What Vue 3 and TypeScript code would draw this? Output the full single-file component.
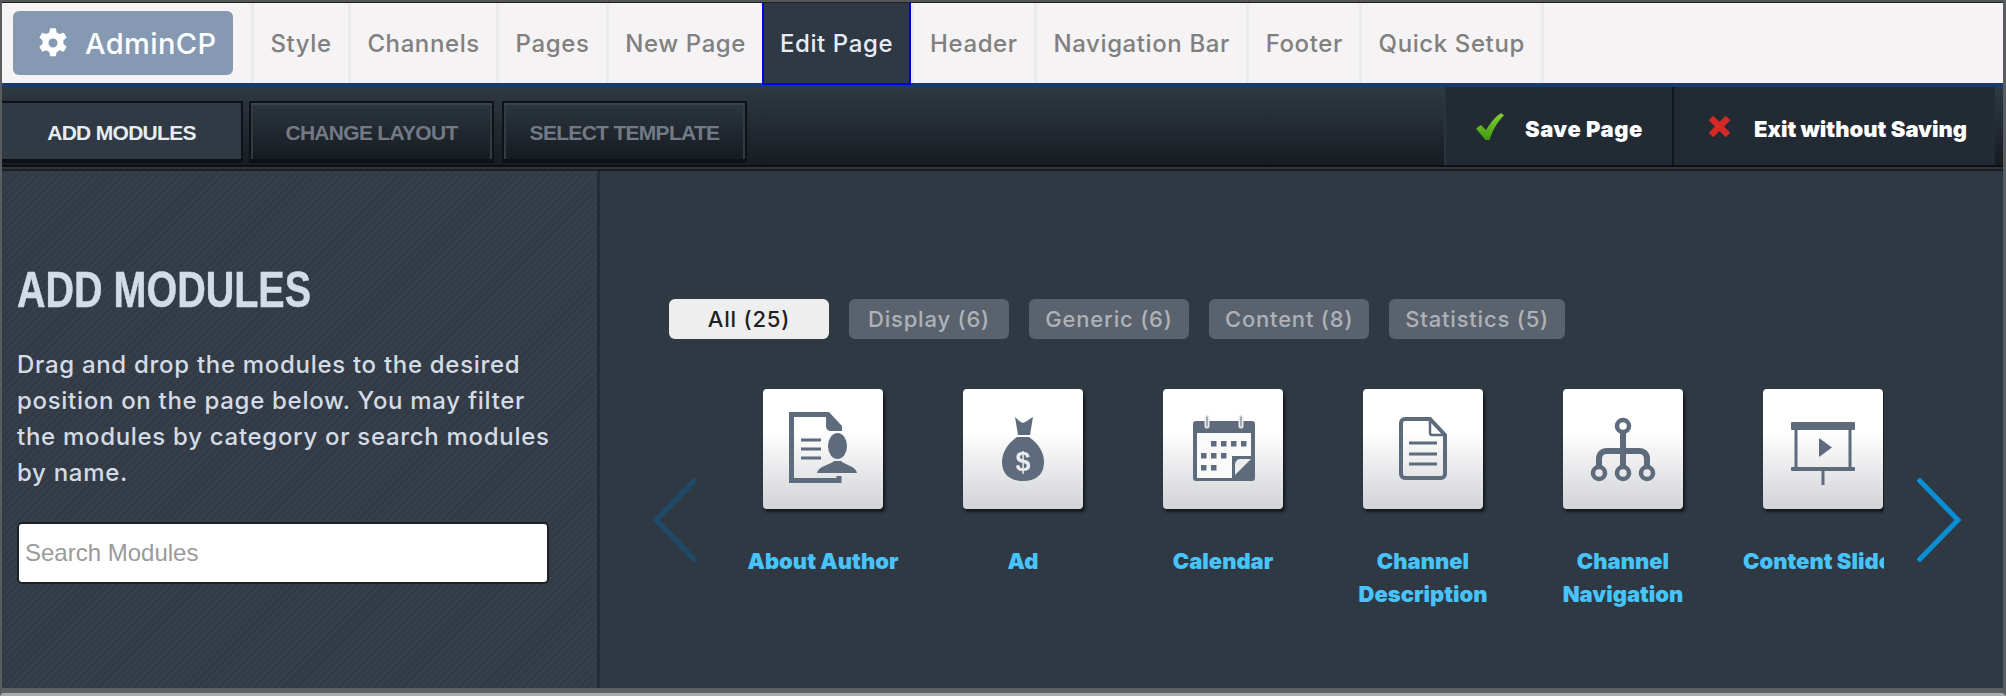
<script setup lang="ts">
interface Module {
  name: string
  icon: string
}

const navItems: string[] = ['Style', 'Channels', 'Pages', 'New Page', 'Edit Page', 'Header', 'Navigation Bar', 'Footer', 'Quick Setup']
const filters: string[] = ['All (25)', 'Display (6)', 'Generic (6)', 'Content (8)', 'Statistics (5)']
const modules: Module[] = [
  { name: 'About Author', icon: 'author' },
  { name: 'Ad', icon: 'bag' },
  { name: 'Calendar', icon: 'calendar' },
  { name: 'Channel Description', icon: 'doc' },
  { name: 'Channel Navigation', icon: 'tree' },
  { name: 'Content Slider', icon: 'screen' }
]
</script>

<template>
  <div class="page">
    <nav class="topnav">
      <div class="brand">
        <svg class="gear" viewBox="0 0 24 24" width="34" height="34">
          <path fill="#fff" fill-rule="evenodd" d="M10 1.500h4l.6 3a8 8 0 0 1 2.100 1.200l2.900-1 2 3.500-2.300 2a8 8 0 0 1 0 2.400l2.300 2-2 3.500-2.900-1a8 8 0 0 1-2.100 1.200l-.6 3h-4l-.6-3a8 8 0 0 1-2.100-1.200l-2.900 1-2-3.500 2.300-2a8 8 0 0 1 0-2.400l-2.300-2 2-3.500 2.900 1a8 8 0 0 1 2.100-1.200zM12 8.800a3.200 3.200 0 1 0 0 6.400 3.200 3.200 0 0 0 0-6.400z" />
        </svg>
        <span>AdminCP</span>
      </div>
      <a v-for="item in navItems" :key="item" class="nav-item" :class="{ active: item === 'Edit Page' }">{{ item }}</a>
    </nav>

    <div class="toolbar">
      <div class="tabs">
        <div class="tab current">ADD MODULES</div>
        <div class="tab">CHANGE LAYOUT</div>
        <div class="tab">SELECT TEMPLATE</div>
      </div>
      <div class="actions">
        <div class="action save">
          <svg viewBox="0 0 28 27" width="28" height="27">
            <defs>
              <linearGradient id="tick" x1="0" y1="0" x2="0" y2="1">
                <stop offset="0" stop-color="#86d132" />
                <stop offset="1" stop-color="#3f9a12" />
              </linearGradient>
            </defs>
            <path fill="url(#tick)" d="M0 15.500l5-3.500 5 5C14 10 19 4 25 0l3 2.500C21 9 17 17 13.500 27h-4z" />
          </svg>
          <span>Save Page</span>
        </div>
        <div class="action exit">
          <svg viewBox="0 0 23 23" width="23" height="23">
            <path stroke="#d42a26" stroke-width="6.500" d="M3 3l17 17M20 3L3 20" fill="none" />
          </svg>
          <span>Exit without Saving</span>
        </div>
      </div>
    </div>
    <div class="rule"></div>

    <div class="content">
      <aside class="sidebar">
        <h1>ADD MODULES</h1>
        <p>Drag and drop the modules to the desired<br />position on the page below. You may filter<br />the modules by category or search modules<br />by name.</p>
        <input class="search" type="text" placeholder="Search Modules" />
      </aside>

      <main class="main">
        <div class="filters">
          <span v-for="(f, i) in filters" :key="f" class="filter" :class="{ on: i === 0 }">{{ f }}</span>
        </div>

        <div class="carousel">
          <svg class="arrow" viewBox="0 0 44 84" width="44" height="84">
            <path d="M43 1L3 42l40 41" fill="none" stroke="#1f4b6b" stroke-width="5" />
          </svg>
          <div class="track">
            <div v-for="m in modules" :key="m.name" class="module">
              <div class="tile">
                <svg viewBox="0 0 120 120" width="120" height="120">
                  <g v-if="m.icon === 'author'">
                    <path d="M63 25.500H28.500v66H76V87" fill="none" stroke="#5d6b7c" stroke-width="5" />
                    <path d="M63 23h3l13 14v5H68c-3 0-5-2-5-5z" fill="#5d6b7c" />
                    <path d="M38 51h20M38 60h20M38 69h20" stroke="#5d6b7c" stroke-width="3" fill="none" />
                    <ellipse cx="74.500" cy="57" rx="9.500" ry="13" fill="#5d6b7c" />
                    <path d="M54 84c1-7 13-8 17-12h7c4 4 15 5 16 12z" fill="#5d6b7c" />
                  </g>
                  <g v-else-if="m.icon === 'bag'">
                    <path d="M52 28c3 3 5 5 8 6 3-1 5-3 10-6l-3 18H55z" fill="#5d6b7c" />
                    <path d="M54 48h12c10 7 15 16 15 25 0 14-10 19-21 19s-21-5-21-19c0-9 5-18 15-25z" fill="#5d6b7c" />
                    <text x="60" y="82" text-anchor="middle" class="dollar">$</text>
                  </g>
                  <g v-else-if="m.icon === 'calendar'">
                    <path d="M33 32h56a3 3 0 0 1 3 3v54a3 3 0 0 1-3 3H33a3 3 0 0 1-3-3V35a3 3 0 0 1 3-3z" fill="#5d6b7c" />
                    <path d="M34 44h54v23H69v22H34z" fill="#fafafa" />
                    <path d="M72 86V76c0-3 2-6 5-6h11z" fill="#eceded" />
                    <path d="M44 28v9M78 28v9" stroke="#eaeaea" stroke-width="5" stroke-linecap="round" />
                    <path d="M44 28v9M78 28v9" stroke="#8d97a3" stroke-width="1.500" stroke-linecap="round" />
                    <g fill="#5d6b7c">
                      <rect x="48" y="52" width="5.500" height="5.500" /><rect x="58" y="52" width="5.500" height="5.500" /><rect x="68" y="52" width="5.500" height="5.500" /><rect x="78" y="52" width="5.500" height="5.500" />
                      <rect x="38" y="64" width="5.500" height="5.500" /><rect x="48" y="64" width="5.500" height="5.500" /><rect x="58" y="64" width="5.500" height="5.500" />
                      <rect x="38" y="76" width="5.500" height="5.500" /><rect x="48" y="76" width="5.500" height="5.500" />
                    </g>
                  </g>
                  <g v-else-if="m.icon === 'doc'">
                    <path d="M42 30h25l15 16v39a4 4 0 0 1-4 4H42a4 4 0 0 1-4-4V34a4 4 0 0 1 4-4z" fill="none" stroke="#5d6b7c" stroke-width="4" />
                    <path d="M67 31v13a2 2 0 0 0 2 2h13" fill="none" stroke="#5d6b7c" stroke-width="2.500" />
                    <path d="M46 54h28M46 65h28M46 75h28" stroke="#5d6b7c" stroke-width="3" fill="none" />
                  </g>
                  <g v-else-if="m.icon === 'tree'">
                    <g fill="none" stroke="#5d6b7c" stroke-width="4.500">
                      <circle cx="60" cy="37" r="6" /><circle cx="36" cy="84" r="6" /><circle cx="60" cy="84" r="6" /><circle cx="84" cy="84" r="6" />
                    </g>
                    <path d="M60 43v35M36 78V70c0-5 3-8 8-8h32c5 0 8 3 8 8v8" fill="none" stroke="#5d6b7c" stroke-width="6" />
                  </g>
                  <g v-else>
                    <rect x="28" y="33" width="64" height="8" rx="1" fill="#5d6b7c" />
                    <rect x="28" y="78" width="64" height="4" rx="1" fill="#5d6b7c" />
                    <path d="M33 40v40M87 40v40" stroke="#5d6b7c" stroke-width="3" />
                    <path d="M56 49l13 9.500-13 9.500z" fill="#5d6b7c" />
                    <path d="M60 82v14" stroke="#5d6b7c" stroke-width="3" />
                  </g>
                </svg>
              </div>
              <div class="label">{{ m.name }}</div>
            </div>
          </div>
          <svg class="arrow next" viewBox="0 0 44 84" width="44" height="84">
            <path d="M1 1l40 41-40 41" fill="none" stroke="#0a8fd4" stroke-width="5" />
          </svg>
        </div>
      </main>
    </div>
  </div>
</template>

<style>
html,
body {
  margin: 0;
  background: #2f3943;
}
</style>

<style scoped>
.page {
  width: 2006px;
  height: 696px;
  display: flex;
  flex-direction: column;
  overflow: hidden;
  font-family: Inter, "Open Sans", sans-serif;
  border-top: 2px solid #55565a;
  border-left: 2px solid #5a5d60;
  border-right: 3px solid #5a5d60;
  border-bottom: 3px solid #a9aaac;
  box-sizing: border-box;
}
.topnav {
  height: 85px;
  flex: none;
  box-sizing: border-box;
  border-top: 1px solid #1c2126;
  border-bottom: 4px solid #1a3a6e;
  background: #f5f3f4;
  display: flex;
  align-items: stretch;
  padding-left: 11px;
}
.brand {
  width: 220px;
  height: 64px;
  margin: 8px 18px 0 0;
  background: #8599b3;
  border-radius: 6px;
  color: #fff;
  display: flex;
  align-items: center;
  gap: 15px;
  padding-left: 23px;
  box-sizing: border-box;
  font-size: 29px;
  letter-spacing: 0.4px;
  font-weight: 500;
}
.nav-item {
  display: flex;
  align-items: center;
  padding: 0 16.400px;
  border-left: 3px solid #ebebeb;
  color: #808080;
  font-size: 24px;
  letter-spacing: 0.6px;
  font-weight: 500;
  white-space: nowrap;
}
.nav-item:last-child {
  border-right: 3px solid #ebebeb;
}
.nav-item.active {
  background: #2f3943;
  color: #e8ecf2;
  border: 2px solid #0000e0;
  border-top: 0;
  margin-bottom: -2px;
  padding: 0 15.500px;
}
.toolbar {
  height: 80px;
  flex: none;
  box-sizing: border-box;
  background: linear-gradient(#2f3942, #171c22);
  border-bottom: 2px solid #0c1014;
  display: flex;
  justify-content: space-between;
}
.rule {
  flex: none;
  height: 2px;
  background: #30343a;
}
.tabs {
  display: flex;
  gap: 8px;
  padding-top: 14px;
}
.tab {
  width: 245px;
  height: 62px;
  box-sizing: border-box;
  border: 2px solid #0e1216;
  border-bottom: 4px solid #0e1216;
  padding-top: 4px;
  background: linear-gradient(#2c3640, #161b20);
  box-shadow: inset 0 2px 0 #3a424a, inset 2px 0 0 #333a42, inset -2px 0 0 #333a42;
  color: #737a85;
  font: bold 21px "Liberation Sans", sans-serif;
  letter-spacing: -0.7px;
  display: flex;
  align-items: center;
  justify-content: center;
}
.tab.current {
  width: 241px;
  margin-right: -2px;
  background: #2f3a44;
  box-shadow: none;
  color: #e8ecf2;
  border-left: 0;
}
.actions {
  display: flex;
  margin-right: 8px;
  height: 78px;
}
.action {
  background: #222b34;
  border-left: 2px solid #11161b;
  display: flex;
  align-items: center;
  box-sizing: border-box;
  color: #fff;
  font-size: 22px;
  letter-spacing: 0;
  font-weight: 900;
  white-space: nowrap;
}
.action span {
  margin-top: 5px;
}
.save {
  width: 228px;
  border-left-color: #2a333c;
  padding-left: 30px;
  gap: 21px;
  letter-spacing: 0.5px;
}
.exit {
  width: 323px;
  padding-left: 34px;
  gap: 23px;
}
.content {
  flex: 1;
  display: flex;
  border-top: 2px solid #1b1f24;
  border-bottom: 5px solid #5d6166;
  min-height: 0;
}
.sidebar {
  width: 598px;
  flex: none;
  box-sizing: border-box;
  border-right: 3px solid #232c35;
  padding: 94px 0 0 15px;
  background: repeating-linear-gradient(135deg, #37404a 0 2px, #323b45 2px 5px);
  color: #d3dbe6;
}
.sidebar h1 {
  margin: 0 0 32px;
  font: bold 50px/50px "Liberation Sans", sans-serif;
  -webkit-text-stroke: 0.5px #d3dbe6;
  transform: scaleX(0.79);
  transform-origin: left center;
  white-space: nowrap;
}
.sidebar p {
  margin: 0 0 31px;
  font-size: 24px;
  letter-spacing: 0.7px;
  line-height: 36px;
  font-weight: 550;
  white-space: nowrap;
}
.search {
  display: block;
  width: 532px;
  height: 62px;
  box-sizing: border-box;
  border: 2px solid #1c2126;
  border-radius: 5px;
  background: #fff;
  padding: 0 6px;
  font: 24px "Liberation Sans", sans-serif;
}
.search::placeholder {
  color: #9a9a9a;
}
.main {
  flex: 1;
  background: #2f3943;
  padding: 128px 0 0 53px;
  box-sizing: border-box;
  min-width: 0;
}
.filters {
  display: flex;
  gap: 20px;
  margin-left: 16px;
}
.filter {
  height: 40px;
  min-width: 160px;
  box-sizing: border-box;
  padding: 0 16px;
  border-radius: 6px;
  background: #5a626d;
  color: #aeb2b8;
  font-size: 22px;
  letter-spacing: 0.8px;
  font-weight: 500;
  display: flex;
  align-items: center;
  justify-content: center;
}
.filter.on {
  background: #eeeeee;
  color: #1c2128;
}
.carousel {
  display: flex;
  align-items: flex-start;
  margin-top: 50px;
}
.carousel .arrow {
  flex: none;
  margin-top: 89px;
}
.carousel .arrow.next {
  margin-left: 33px;
}
.track {
  width: 1161px;
  margin-left: 26px;
  display: flex;
  overflow: hidden;
  flex: none;
}
.module {
  width: 200px;
  flex: none;
  display: flex;
  flex-direction: column;
  align-items: center;
  padding-bottom: 6px;
}
.tile {
  width: 120px;
  height: 120px;
  border-radius: 4px;
  background: linear-gradient(#fff 35%, #d2d3d6);
  box-shadow: 2px 3px 3px rgba(0, 0, 0, 0.6);
}
.tile svg {
  display: block;
  filter: blur(0.4px);
}
.label {
  margin-top: 36px;
  width: 160px;
  text-align: center;
  color: #47c4fb;
  font-size: 22px;
  letter-spacing: 0;
  line-height: 33px;
  font-weight: 900;
}
.module:last-child .label {
  white-space: nowrap;
  text-align: left;
}
.dollar {
  font: bold 27px "Liberation Sans", sans-serif;
  fill: #e9eaec;
}
</style>
